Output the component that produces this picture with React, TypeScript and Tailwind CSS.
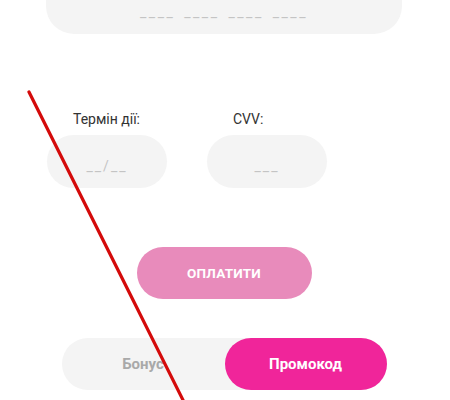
import React, { useState } from "react";

const App = () => {
  const [tab, setTab] = useState<"bonus" | "promo">("promo");

  return (
    <div className="relative w-[450px] h-[400px] overflow-hidden bg-white font-['Roboto','Liberation_Sans',sans-serif]">
      <div className="ml-[46px] w-[356px] flex flex-col">
        {/* Card number */}
        <div className="-mt-[30px] h-[64px] rounded-[28px] bg-[#f4f4f4] flex items-end justify-center pb-[12px]">
          <span className="text-[14px] leading-[20px] text-[#c4c4c4] tracking-[2.5px] [word-spacing:3px]">
            ____ ____ ____ ____
          </span>
        </div>

        {/* Expiry + CVV */}
        <div className="mt-[75px] flex gap-[40px] pl-[1px]">
          <div className="flex flex-col w-[120px]">
            <label className="pl-[26px] text-[14px] leading-[20px] text-[#333]">Термін дії:</label>
            <div className="mt-[6px] h-[53px] rounded-full bg-[#f4f4f4] flex items-center justify-center pt-[8px]">
              <span className="text-[14px] leading-[20px] text-[#c4c4c4] tracking-[2px]">__/__</span>
            </div>
          </div>
          <div className="flex flex-col w-[120px]">
            <label className="pl-[26px] text-[14px] leading-[20px] text-[#333]">CVV:</label>
            <div className="mt-[6px] h-[53px] rounded-full bg-[#f4f4f4] flex items-center justify-center pt-[8px]">
              <span className="text-[14px] leading-[20px] text-[#c4c4c4] tracking-[2px]">___</span>
            </div>
          </div>
        </div>

        {/* Pay */}
        <div className="mt-[59px] flex justify-center">
          <button className="w-[175px] h-[52px] rounded-full bg-[#e88bbb] text-white font-bold text-[13.5px] uppercase tracking-[0.2px]">
            Оплатити
          </button>
        </div>

        {/* Toggle */}
        <div className="mt-[39px] flex justify-center">
          <div className="w-[325px] h-[52px] rounded-full bg-[#f4f4f4] flex">
            <button
              onClick={() => setTab("bonus")}
              className={`flex-1 rounded-full font-bold text-[15px] ${tab === "bonus" ? "bg-[#f0259a] text-white" : "text-[#a9a9a9]"}`}
            >
              Бонус
            </button>
            <button
              onClick={() => setTab("promo")}
              className={`w-[162px] rounded-full font-bold text-[15px] ${tab === "promo" ? "bg-[#f0259a] text-white" : "text-[#a9a9a9]"}`}
            >
              Промокод
            </button>
          </div>
        </div>
      </div>

      {/* red annotation stroke */}
      <svg className="absolute inset-0 pointer-events-none" width="450" height="400">
        <line x1="29" y1="92" x2="185" y2="404" stroke="#d40a0a" strokeWidth="3.2" strokeLinecap="round" />
      </svg>
    </div>
  );
};

export default App;
